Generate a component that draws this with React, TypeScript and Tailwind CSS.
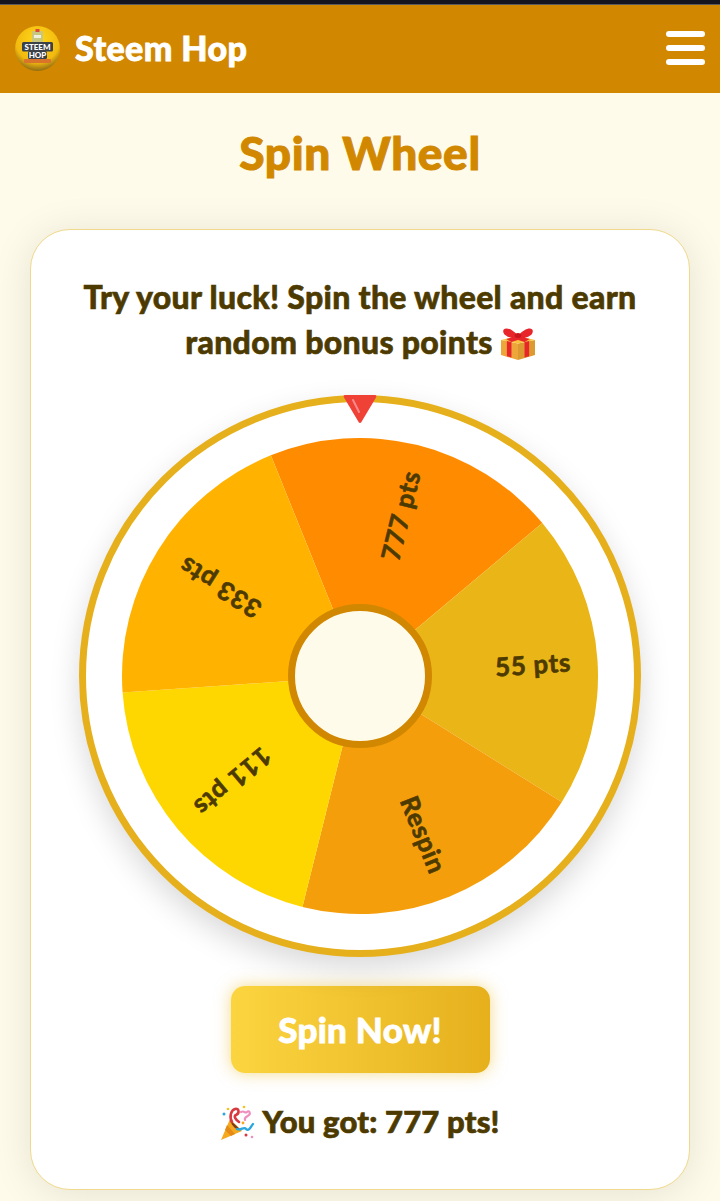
const font = { fontFamily: "Lato, 'Noto Sans', sans-serif" };

const segments = [
  { color: "#ff8c00", start: -22, label: "777 pts" },
  { color: "#eab517", start: 50, label: "55 pts" },
  { color: "#f59e0b", start: 122, label: "Respin" },
  { color: "#ffd700", start: 194, label: "111 pts" },
  { color: "#ffb300", start: 266, label: "333 pts" },
];

function point(angle: number, r: number) {
  const rad = ((angle - 90) * Math.PI) / 180;
  return `${(250 + r * Math.cos(rad)).toFixed(2)} ${(250 + r * Math.sin(rad)).toFixed(2)}`;
}

function Wheel() {
  return (
    <svg viewBox="0 0 500 500" className="h-[476px] w-[476px]">
      {segments.map(s => (
        <path key={s.label} d={`M250 250 L${point(s.start, 250)} A250 250 0 0 1 ${point(s.start + 72, 250)} Z`} fill={s.color} />
      ))}
      {segments.map(s => {
        const mid = s.start + 36;
        return (
          <text
            key={s.label}
            transform={`translate(${point(mid, 222)}) rotate(${mid - 90})`}
            textAnchor="end"
            dominantBaseline="central"
            fontSize="27"
            fontWeight="700"
            fill="#4d3a00"
            stroke="#4d3a00"
            strokeWidth="0.7"
            strokeLinejoin="round"
            letterSpacing="0.8"
            fontFamily="Lato, sans-serif"
          >
            {s.label}
          </text>
        );
      })}
    </svg>
  );
}

function Logo() {
  return (
    <svg viewBox="0 0 45 45" className="h-[45px] w-[45px]">
      <defs>
        <radialGradient id="coin" cx="50%" cy="32%" r="68%">
          <stop offset="0%" stopColor="#ffd91a" />
          <stop offset="72%" stopColor="#f2b90f" />
          <stop offset="100%" stopColor="#8f6c14" />
        </radialGradient>
      </defs>
      <circle cx="22.5" cy="22.5" r="22.5" fill="url(#coin)" />
      <rect x="17" y="5" width="11" height="12" rx="1" fill="#c9c77e" />
      <rect x="20.5" y="3" width="4" height="3" fill="#d9483a" />
      <rect x="19" y="9" width="7" height="3" fill="#f0f0e0" />
      <rect x="7" y="16" width="31" height="9.5" rx="1.5" fill="#3b4148" />
      <rect x="13" y="25" width="19" height="8" rx="1.5" fill="#3b4148" />
      <rect x="9" y="33" width="27" height="4" rx="1" fill="#d9742a" />
      <text x="22.5" y="23.5" textAnchor="middle" fontSize="8" fontWeight="900" fill="#fff" fontFamily="Lato, sans-serif">STEEM</text>
      <text x="22.5" y="32" textAnchor="middle" fontSize="8" fontWeight="900" fill="#fff" fontFamily="Lato, sans-serif">HOP</text>
    </svg>
  );
}

function Gift() {
  return (
    <svg viewBox="3 0 26 33" preserveAspectRatio="none" className="inline-block h-[33px] w-[34px] align-[-6px]">
      <path d="M3 13 L16 16.5 L16 33 L3 28 Z" fill="#eda63a" />
      <path d="M16 16.5 L29 13 L29 28 L16 33 Z" fill="#dd9a30" />
      <path d="M3 13 L16 9 L29 13 L16 16.5 Z" fill="#f9c33c" />
      <path d="M7.5 14 L11 15 L11 30.5 L7.5 29.2 Z" fill="#e8252a" />
      <path d="M21 15 L24.5 14 L24.5 29.2 L21 30.5 Z" fill="#e8252a" />
      <path d="M7 12 L20 8 L24.5 9.5 L11 15 Z" fill="#e8252a" />
      <path d="M25 12 L12 8 L7.5 9.5 L21 15 Z" fill="#e8252a" />
      <path d="M16 9 C11 0 3 -1 5 6 C6 10 12 11 16 9 Z" fill="#e8252a" />
      <path d="M16 9 C21 0 29 -1 27 6 C26 10 20 11 16 9 Z" fill="#e8252a" />
      <circle cx="16" cy="8.5" r="2.5" fill="#c9151c" />
    </svg>
  );
}

function Party() {
  return (
    <svg viewBox="0 0 36 36" className="inline-block h-[36px] w-[36px] align-[-8px]">
      <path d="M1 35 L10 14 L22 26 Z" fill="#f4a91f" />
      <path d="M7 20 L15 29 L11 31 L5 25 Z" fill="#e58a17" />
      <path d="M10 15 L21 25 C18 26 12 22 10 15 Z" fill="#7a3b1a" />
      <path d="M12 17 C9 12 11 5 15 4 C19 3 20 8 16 10 C13 11 16 15 19 17" fill="none" stroke="#d8393f" strokeWidth="2.6" strokeLinecap="round" />
      <path d="M21 7 C24 5 25 9 27 7 C29 5 31 8 29 10 C27 12 24 12 25 15" fill="none" stroke="#ef8fc0" strokeWidth="2.2" strokeLinecap="round" />
      <path d="M17 24 C21 26 24 21 26 24 C29 27 31 21 33 19" fill="none" stroke="#2aa7dc" strokeWidth="2.4" strokeLinecap="round" />
      <circle cx="4" cy="9" r="1.5" fill="#2aa7dc" />
      <circle cx="8" cy="4" r="1.3" fill="#f4c21f" />
      <circle cx="24" cy="2" r="1.3" fill="#f4c21f" />
      <circle cx="23" cy="18" r="1.4" fill="#f4a91f" />
      <circle cx="26" cy="30" r="1.5" fill="#d8393f" />
      <circle cx="32" cy="32" r="1.3" fill="#ef8fc0" />
    </svg>
  );
}

export default function App() {
  return (
    <div className="flex h-[1201px] w-[720px] flex-col overflow-hidden bg-[#fffbea]" style={font}>
      <div className="h-[5px] border-b border-[#5a5a5a] bg-[#15151f]"></div>
      <header className="flex h-[88px] items-center justify-between bg-[#d18800] px-[15px] pb-[2px]">
        <div className="flex items-center gap-[15px]">
          <Logo />
          <h1 className="text-[34px] leading-none font-black tracking-[0.4px] text-white [-webkit-text-stroke:0.8px_white]">Steem Hop</h1>
        </div>
        <div className="flex w-[39px] flex-col gap-[8px]">
          <span className="h-[6px] rounded-full bg-white"></span>
          <span className="h-[6px] rounded-full bg-white"></span>
          <span className="h-[6px] rounded-full bg-white"></span>
        </div>
      </header>
      <main className="flex flex-col items-center">
        <h2 className="mt-[33px] text-[46px] leading-[54px] font-black tracking-[0.6px] text-[#d18800] [-webkit-text-stroke:1px_#d18800]">Spin Wheel</h2>
        <section className="relative mt-[49px] flex h-[961px] w-[660px] flex-col items-center rounded-[40px] border border-[#f0d98c] bg-white shadow-[0_4px_40px_rgba(0,0,0,0.1)]">
          <p className="mt-[44px] w-[590px] text-center text-[32px] leading-[45px] font-black tracking-[0.3px] text-[#4d3a00] [-webkit-text-stroke:0.6px_#4d3a00]">
            Try your luck! Spin the wheel and earn random bonus points <Gift />
          </p>
          <div className="relative mt-[31px] flex h-[562px] w-[562px] items-center justify-center rounded-full border-[7px] border-[#e6b01c] bg-white shadow-[0_12px_30px_rgba(0,0,0,0.15)]">
            <Wheel />
            <div className="absolute left-1/2 top-1/2 h-[144px] w-[144px] -translate-x-1/2 -translate-y-1/2 rounded-full border-[7px] border-[#d18800] bg-[#fffbea]"></div>
            <svg viewBox="0 0 34 30" className="absolute left-1/2 top-[-8px] h-[30px] w-[34px] -translate-x-1/2">
              <path d="M2 1 L32 1 C33 1 34 2 33 3.5 L19 27 C18 29.5 16 29.5 15 27 L1 3.5 C0 2 1 1 2 1 Z" fill="#ef4136" />
              <path d="M10 6 L16 18" stroke="#f88a8a" strokeWidth="2" strokeLinecap="round" />
            </svg>
          </div>
          <button className="mt-[29px] h-[87px] w-[259px] rounded-[14px] bg-gradient-to-r from-[#fbd53f] to-[#e6b01c] text-[35px] font-black tracking-[0.3px] text-white shadow-[0_0_16px_rgba(234,181,23,0.5)] [-webkit-text-stroke:0.8px_white]">
            Spin Now!
          </button>
          <p className="mt-[29px] text-[31px] leading-[38px] font-black tracking-[0.2px] text-[#4d3a00] [-webkit-text-stroke:0.7px_#4d3a00]">
            <Party /> You got: 777 pts!
          </p>
        </section>
      </main>
    </div>
  );
}
